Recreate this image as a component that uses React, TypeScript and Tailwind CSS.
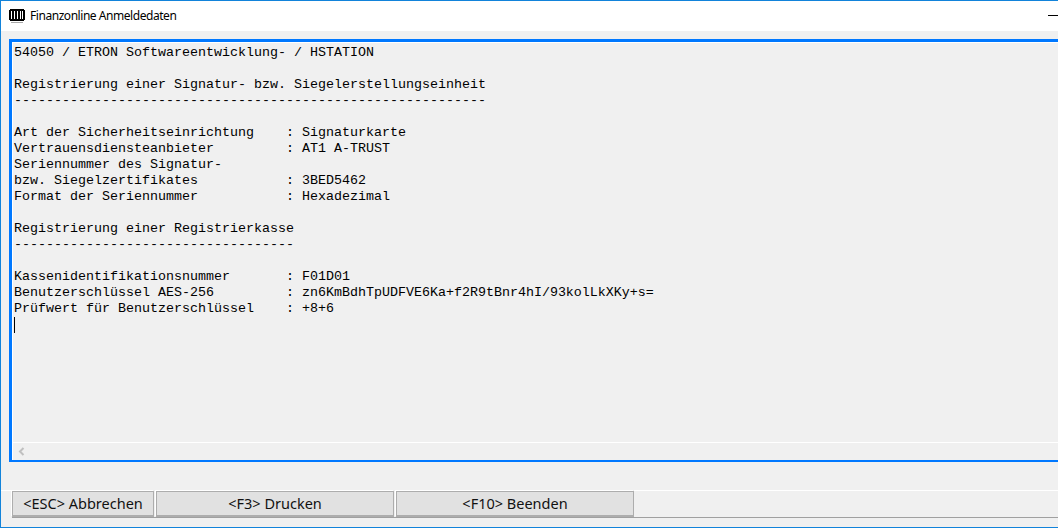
import React from "react";

const lines = [
  "54050 / ETRON Softwareentwicklung- / HSTATION",
  "",
  "Registrierung einer Signatur- bzw. Siegelerstellungseinheit",
  "-----------------------------------------------------------",
  "",
  "Art der Sicherheitseinrichtung    : Signaturkarte",
  "Vertrauensdiensteanbieter         : AT1 A-TRUST",
  "Seriennummer des Signatur-",
  "bzw. Siegelzertifikates           : 3BED5462",
  "Format der Seriennummer           : Hexadezimal",
  "",
  "Registrierung einer Registrierkasse",
  "-----------------------------------",
  "",
  "Kassenidentifikationsnummer       : F01D01",
  "Benutzerschlüssel AES-256         : zn6KmBdhTpUDFVE6Ka+f2R9tBnr4hI/93kolLkXKy+s=",
  "Prüfwert für Benutzerschlüssel    : +8+6",
];

function BarcodeIcon() {
  return (
    <svg width="16" height="14" viewBox="0 0 16 14" className="shrink-0" shapeRendering="crispEdges">
      <rect x="0" y="1" width="16" height="10" fill="#000" />
      <rect x="1" y="0" width="14" height="12" fill="#000" />
      {[2, 5, 8, 11, 13].map((x) => (
        <rect key={x} x={x} y="2" width="1" height="8" fill="#fff" />
      ))}
      <rect x="2" y="13" width="12" height="1" fill="#a8a8a8" />
    </svg>
  );
}

function Btn({ w, label }: { w: string; label: string }) {
  return (
    <div className={`${w} h-full flex items-center justify-center bg-[#e1e1e1] border border-[#adadad] border-b-2 shadow-[-1px_-1px_0_#fff] text-[14.5px] text-[#111] font-['Noto_Sans',sans-serif]`}>
      {label}
    </div>
  );
}

export default function App() {
  return (
    <div className="w-[1058px] h-[528px] overflow-hidden flex flex-col bg-[#f0f0f0] border-t border-l border-b border-[#1283da]">
      <div className="h-[30px] shrink-0 bg-white flex items-center gap-[5px] pl-2">
        <BarcodeIcon />
        <span className="text-[12px] tracking-[-0.45px] text-black font-['Noto_Sans',sans-serif]">Finanzonline Anmeldedaten</span>
        <div className="ml-auto w-[10px] h-px bg-black mb-[1px]" />
      </div>
      <div className="flex-1 flex flex-col pl-2 pt-2">
        <div className="h-[423px] -mr-4 flex flex-col border-t-[3px] border-l-[3px] border-b-2 border-r-[3px] border-[#0078ff]">
          <div className="flex-1 border-l border-t border-white pl-px pt-[2px] font-['Liberation_Mono',monospace] text-[13.33px] leading-4 text-black whitespace-pre">
            {lines.map((l, i) => (
              <div key={i} className="h-4">{l}</div>
            ))}
            <div className="w-px h-4 bg-black" />
          </div>
          <div className="h-[18px] shrink-0 border-t border-l border-white flex items-center pl-[5px]">
            <svg width="7" height="9" viewBox="0 0 7 9" className="text-[#c0c0c0]">
              <path d="M5.5 1 L2 4.5 L5.5 8" fill="none" stroke="currentColor" strokeWidth="2" />
            </svg>
          </div>
        </div>
        <div className="mt-7 h-[28px] -ml-2 flex border-t border-white relative">
          <div className="absolute left-[11px] right-0 bottom-0 h-px bg-[#a0a0a0]" />
          <div className="flex gap-[2px] ml-[11px] h-[27px] -mt-px relative bg-[#f0f0f0] pt-px">
            <Btn w="w-[142px]" label="<ESC> Abbrechen" />
            <Btn w="w-[238px]" label="<F3> Drucken" />
            <Btn w="w-[238px]" label="<F10> Beenden" />
          </div>
        </div>
      </div>
    </div>
  );
}
